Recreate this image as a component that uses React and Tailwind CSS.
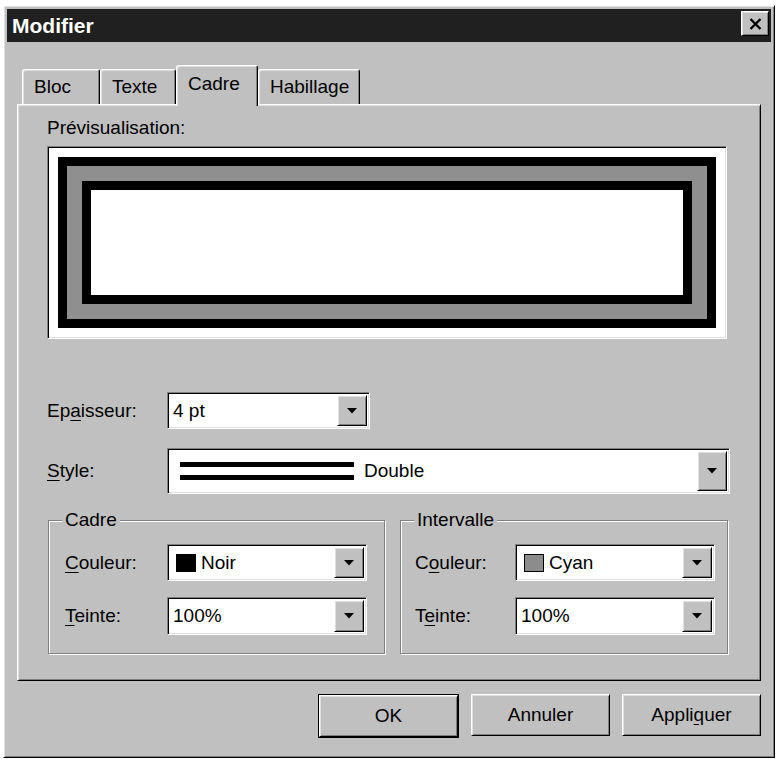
import React from 'react'

// classic 3D edges
const raised = 'border border-t-white border-l-white border-r-black border-b-black shadow-[inset_1px_1px_0_#dfdfdf,inset_-1px_-1px_0_#808080]'
const sunken = 'border border-t-[#808080] border-l-[#808080] border-r-white border-b-white shadow-[inset_1px_1px_0_#000,inset_-1px_-1px_0_#dfdfdf]'

const Arrow = () => (
  <svg width="10" height="6" viewBox="0 0 10 6">
    <polygon points="0,0 10,0 5,5.5" fill="#000" />
  </svg>
)

const DropButton = () => (
  <div className={`w-[30px] self-stretch bg-[#c0c0c0] flex items-center justify-center ${raised}`}>
    <Arrow />
  </div>
)

const Select = ({ className, children }) => (
  <div className={`flex bg-white p-[2px] ${sunken} ${className}`}>
    <div className="flex-1 flex items-center pl-[3px] min-w-0">{children}</div>
    <DropButton />
  </div>
)

const Tab = ({ label, active, width }) => (
  <div
    className={`flex items-center pl-[11px] rounded-t-[3px] border-t border-l border-r border-t-white border-l-white border-r-black bg-[#c0c0c0] shadow-[inset_1px_1px_0_#dfdfdf,inset_-1px_0_0_#808080] ${width} ${
      active ? 'relative z-10 h-[41px] -mb-[2px] pb-[4px]' : 'h-[35px]'
    }`}
  >
    {label}
  </div>
)

const Group = ({ title, className, children }) => (
  <div className={`relative border border-[#808080] shadow-[inset_1px_1px_0_#fff,1px_1px_0_#fff] h-[134px] ${className}`}>
    <span className="absolute -top-[12px] left-[13px] px-[3px] bg-[#c0c0c0]">{title}</span>
    {children}
  </div>
)

const Button = ({ children, primary }) => (
  <div className={primary ? 'border border-black' : ''}>
    <div className={`w-[139px] h-[42px] flex items-center justify-center bg-[#c0c0c0] ${raised} ${primary ? 'w-[137px] h-[40px]' : ''}`}>
      {children}
    </div>
  </div>
)

const U = ({ children }) => <span className="underline underline-offset-[3px]">{children}</span>

export default function App() {
  return (
    <div className="w-[779px] h-[759px] bg-white pt-[5px] pl-[3px] font-['Liberation_Sans',Arial,sans-serif] text-[19px] leading-[22px] text-black">
      <div className={`w-[772px] h-[753px] bg-[#c0c0c0] p-[3px] ${raised}`}>
        {/* title bar */}
        <div className="h-[33px] bg-[#202020] flex items-center justify-between pl-[5px] pr-[2px]">
          <span className="text-white font-bold text-[21px]">Modifier</span>
          <div className={`w-[28px] h-[25px] bg-[#c0c0c0] flex items-center justify-center -mt-[4px] ${raised}`}>
            <svg width="13" height="12" viewBox="0 0 13 12">
              <path d="M1.5 1 L11.5 11 M11.5 1 L1.5 11" stroke="#000" strokeWidth="2.4" />
            </svg>
          </div>
        </div>

        <div className="pl-[10px] pr-[10px] pt-[23px]">
          {/* tabs */}
          <div className="flex items-end pl-[5px]">
            <Tab label="Bloc" width="w-[78px]" />
            <Tab label="Texte" width="w-[76px]" />
            <Tab label="Cadre" width="w-[82px]" active />
            <Tab label="Habillage" width="w-[102px]" />
          </div>

          {/* panel */}
          <div className={`h-[577px] pt-[12px] pl-[29px] ${raised}`}>
            <div>Prévisualisation:</div>
            <div className={`mt-[7px] w-[680px] h-[193px] bg-white p-[10px] ${sunken}`}>
              <div className="h-full border-[9px] border-black bg-[#8f8f8f] p-[15px]">
                <div className="h-full border-[9px] border-black bg-white" />
              </div>
            </div>

            <div className="mt-[53px] flex items-center">
              <span className="w-[120px]">
                Ep<U>a</U>isseur:
              </span>
              <Select className="w-[203px] h-[37px]">4 pt</Select>
            </div>

            <div className="mt-[19px] flex items-center">
              <span className="w-[120px]">
                <U>S</U>tyle:
              </span>
              <Select className="w-[563px] h-[46px]">
                <div className="flex items-center gap-[10px] pl-[7px]">
                  <div className="flex flex-col gap-[8px]">
                    <div className="w-[174px] h-[5px] bg-black" />
                    <div className="w-[174px] h-[5px] bg-black" />
                  </div>
                  <span>Double</span>
                </div>
              </Select>
            </div>

            <div className="mt-[26px] flex gap-[15px] pl-px">
              <Group title="Cadre" className="w-[337px] pt-[23px] pl-[16px]">
                <div className="flex items-center">
                  <span className="w-[102px]">
                    <U>C</U>ouleur:
                  </span>
                  <Select className="w-[200px] h-[37px]">
                    <div className="flex items-center gap-[5px] pl-[3px]">
                      <div className="w-[20px] h-[18px] bg-black" />
                      <span>Noir</span>
                    </div>
                  </Select>
                </div>
                <div className="mt-[16px] flex items-center">
                  <span className="w-[102px]">
                    <U>T</U>einte:
                  </span>
                  <Select className="w-[200px] h-[38px]">100%</Select>
                </div>
              </Group>

              <Group title="Intervalle" className="w-[328px] pt-[23px] pl-[14px]">
                <div className="flex items-center">
                  <span className="w-[100px]">
                    C<U>o</U>uleur:
                  </span>
                  <Select className="w-[200px] h-[37px]">
                    <div className="flex items-center gap-[5px] pl-[3px]">
                      <div className="w-[20px] h-[18px] bg-[#8c8c8c] border border-black" />
                      <span>Cyan</span>
                    </div>
                  </Select>
                </div>
                <div className="mt-[16px] flex items-center">
                  <span className="w-[100px]">
                    T<U>e</U>inte:
                  </span>
                  <Select className="w-[200px] h-[38px]">100%</Select>
                </div>
              </Group>
            </div>
          </div>

          {/* buttons */}
          <div className="mt-[13px] flex justify-end gap-[12px]">
            <Button primary>OK</Button>
            <Button>Annuler</Button>
            <Button>
              Appli<U>q</U>uer
            </Button>
          </div>
        </div>
      </div>
    </div>
  )
}
